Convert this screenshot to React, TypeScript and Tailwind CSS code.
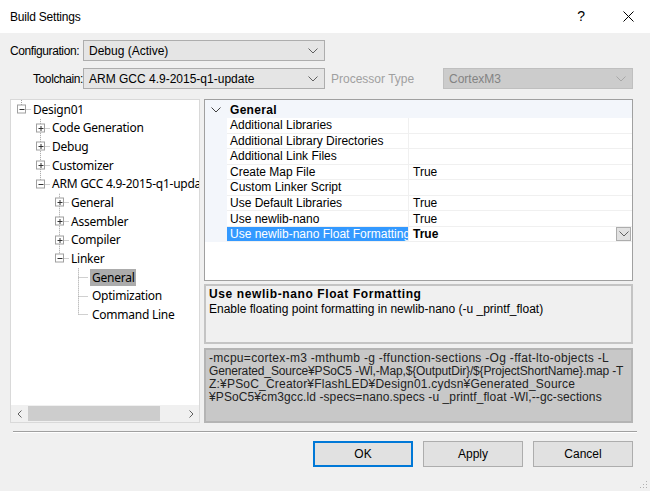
import React from 'react';

const ui = { fontFamily: '"Liberation Sans", Arial, sans-serif' };
const treeFont = { fontFamily: '"Noto Sans", "Open Sans", sans-serif' };

function Chevron({ color = '#606060' }: { color?: string }) {
  return (
    <svg width="10" height="6" viewBox="0 0 10 6" fill="none">
      <path d="M0.5 0.5L5 5L9.5 0.5" stroke={color} strokeWidth="1" />
    </svg>
  );
}

function Combo({ text, width, disabled }: { text: string; width: string; disabled?: boolean }) {
  return (
    <div
      className={`${width} h-[21px] flex items-center justify-between pl-[5px] pr-[6px] border ${
        disabled ? 'bg-[#cccccc] border-[#bfbfbf] text-[#838383]' : 'bg-[#e5e5e5] border-[#adadad] text-[#000]'
      }`}
    >
      <span className="text-[12px]">{text}</span>
      <Chevron color={disabled ? '#a8a8a8' : '#606060'} />
    </div>
  );
}

const ROW = 18.65;
const treeRows: { label: string; level: number; box?: '+' | '-'; selected?: boolean }[] = [
  { label: 'Design01', level: 0, box: '-' },
  { label: 'Code Generation', level: 1, box: '+' },
  { label: 'Debug', level: 1, box: '+' },
  { label: 'Customizer', level: 1, box: '+' },
  { label: 'ARM GCC 4.9-2015-q1-update', level: 1, box: '-' },
  { label: 'General', level: 2, box: '+' },
  { label: 'Assembler', level: 2, box: '+' },
  { label: 'Compiler', level: 2, box: '+' },
  { label: 'Linker', level: 2, box: '-' },
  { label: 'General', level: 3, selected: true },
  { label: 'Optimization', level: 3 },
  { label: 'Command Line', level: 3 },
];

function TreeLines() {
  const y = (i: number) => 9.5 + ROW * i;
  const x = (l: number) => 10.5 + 19 * l;
  const dot = { stroke: '#a0a0a0', strokeWidth: 1, strokeDasharray: '1 1' };
  return (
    <svg className="absolute left-0 top-0" width="190" height="240" fill="none">
      {/* root */}
      <line x1={x(0)} y1={0} x2={x(0)} y2={y(0)} {...dot} />
      <line x1={x(1)} y1={y(1) - 9} x2={x(1)} y2={y(4)} {...dot} />
      <line x1={x(2)} y1={y(5) - 9} x2={x(2)} y2={y(8)} {...dot} />
      <line x1={x(3)} y1={y(9) - 9} x2={x(3)} y2={y(11)} {...dot} />
      {treeRows.map((r, i) => (
        <line key={'h' + i} x1={x(r.level)} y1={Math.floor(y(i)) + 0.5} x2={x(r.level) + 10} y2={Math.floor(y(i)) + 0.5} {...dot} />
      ))}
      {treeRows.map((r, i) =>
        r.box ? (
          <g key={'b' + i}>
            <rect x={x(r.level) - 4} y={Math.floor(y(i)) - 4} width="8" height="8" fill="#fff" stroke="#a0a0a0" />
            <line x1={x(r.level) - 2} y1={Math.floor(y(i)) + 0.5} x2={x(r.level) + 3} y2={Math.floor(y(i)) + 0.5} stroke="#333" />
            {r.box === '+' && (
              <line x1={x(r.level) + 0.5} y1={Math.floor(y(i)) - 2} x2={x(r.level) + 0.5} y2={Math.floor(y(i)) + 3} stroke="#333" />
            )}
          </g>
        ) : null
      )}
    </svg>
  );
}

const props: { name: string; value?: string }[] = [
  { name: 'Additional Libraries' },
  { name: 'Additional Library Directories' },
  { name: 'Additional Link Files' },
  { name: 'Create Map File', value: 'True' },
  { name: 'Custom Linker Script' },
  { name: 'Use Default Libraries', value: 'True' },
  { name: 'Use newlib-nano', value: 'True' },
  { name: 'Use newlib-nano Float Formatting', value: 'True' },
];

export default function App() {
  return (
    <div className="w-[650px] h-[491px] bg-[#f0f0f0] flex flex-col text-[12px] text-black overflow-hidden" style={ui}>
      {/* title bar */}
      <div className="h-[33px] bg-white flex items-center pl-[10px] pr-[16px]">
        <span className="text-[12px] tracking-[-0.2px]">Build Settings</span>
        <span className="ml-auto mr-[38px] text-[14px]">?</span>
        <svg width="11" height="11" viewBox="0 0 11 11">
          <path d="M0.5 0.5L10.5 10.5M10.5 0.5L0.5 10.5" stroke="#000" strokeWidth="1" />
        </svg>
      </div>

      <div className="flex-1 flex flex-col pl-[10px] pr-[17px]">
        <div className="mt-[7px] flex items-center">
          <span className="w-[73px] tracking-[-0.4px]">Configuration:</span>
          <Combo text="Debug (Active)" width="w-[242px]" />
        </div>
        <div className="mt-[7px] flex items-center">
          <span className="w-[73px] pl-[23px] tracking-[-0.4px]">Toolchain:</span>
          <Combo text="ARM GCC 4.9-2015-q1-update" width="w-[242px]" />
          <span className="w-[118px] pl-[6px] text-[#a0a0a0]">Processor Type</span>
          <Combo text="CortexM3" width="flex-1" disabled />
        </div>

        <div className="mt-[10px] flex gap-[4px] h-[324px]">
          {/* tree */}
          <div className="w-[190px] shrink-0 border border-[#d9d9d9] bg-white flex flex-col" style={treeFont}>
            <div className="flex-1 relative overflow-hidden text-[12px] tracking-[-0.25px]">
              <TreeLines />
              {treeRows.map((r, i) => (
                <div
                  key={i}
                  className="h-[18.65px] flex items-center whitespace-nowrap"
                  style={{ paddingLeft: r.level === 3 ? 79 : 20 + 19 * r.level }}
                >
                  <span className={`px-[2px] leading-[17px] ${r.selected ? 'bg-[#acacac]' : ''}`}>{r.label}</span>
                </div>
              ))}
            </div>
            <div className="h-[17px] bg-[#f0f0f0] flex items-center">
              <span className="w-[17px] flex justify-center">
                <svg width="5" height="8" viewBox="0 0 5 8"><path d="M4.5 0.5L1 4L4.5 7.5" stroke="#606060" fill="none" /></svg>
              </span>
              <span className="w-[132px] h-[15px] bg-[#cdcdcd]" />
              <span className="flex-1 flex justify-end pr-[5px]">
                <svg width="5" height="8" viewBox="0 0 5 8"><path d="M0.5 0.5L4 4L0.5 7.5" stroke="#606060" fill="none" /></svg>
              </span>
            </div>
          </div>

          {/* right column */}
          <div className="w-[429px] min-w-0 flex flex-col">
            <div className="h-[182px] border border-[#a0a0a0] bg-white flex flex-col">
              <div className="h-[18px] bg-[#f3f6fb] flex items-center pt-[1px]">
                <span className="w-[22px] flex justify-center">
                  <Chevron color="#404040" />
                </span>
                <span className="pl-[3px] font-bold tracking-[0.3px]">General</span>
              </div>
              {props.map((p, i) => {
                const sel = i === props.length - 1;
                return (
                  <div key={i} className="h-[15.55px] flex">
                    <div className="w-[22px] bg-[#f3f6fb]" />
                    <div
                      className={`w-[182px] px-[3px] flex items-center whitespace-nowrap overflow-hidden border-b border-r ${
                        sel ? 'bg-[#3399ff] text-white border-[#f0f0f0]' : 'border-[#f0f0f0]'
                      }`}
                    >
                      {p.name}
                    </div>
                    <div className={`flex-1 pl-[4px] flex items-center border-b border-[#f0f0f0] ${sel ? 'font-bold' : ''}`}>
                      <span>{p.value}</span>
                      {sel && (
                        <span className="ml-auto mr-[1px] w-[15px] h-[14px] bg-[#e1e1e1] border border-[#adadad] flex items-center justify-center">
                          <Chevron color="#606060" />
                        </span>
                      )}
                    </div>
                  </div>
                );
              })}
            </div>

            <div className="mt-[3px] h-[60px] border-2 border-[#c4c4c4] bg-[#f0f0f0] px-[3px] pt-[1px]">
              <div className="font-bold leading-[15px] tracking-[0.6px]">Use newlib-nano Float Formatting</div>
              <div className="leading-[15px]">Enable floating point formatting in newlib-nano (-u _printf_float)</div>
            </div>

            <div className="mt-[4px] flex-1 border-2 border-[#b4b4b4] bg-[#c8c8c8] px-[3px] pt-[2px] text-[#222] leading-[13px] whitespace-nowrap overflow-hidden">
              <div className="tracking-[0.3px]">-mcpu=cortex-m3 -mthumb -g -ffunction-sections -Og -ffat-lto-objects -L</div>
              <div className="tracking-[-0.15px]">Generated_Source¥PSoC5 -Wl,-Map,${'{'}OutputDir{'}'}/${'{'}ProjectShortName{'}'}.map -T</div>
              <div className="tracking-[0.2px]">Z:¥PSoC_Creator¥FlashLED¥Design01.cydsn¥Generated_Source</div>
              <div className="tracking-[0.1px]">¥PSoC5¥cm3gcc.ld -specs=nano.specs -u _printf_float -Wl,--gc-sections</div>
            </div>
          </div>
        </div>

        <div className="mt-[8px] ml-[3px] mr-[-4px] h-[2px] border-t border-[#a0a0a0] border-b border-b-white" />

        <div className="mt-[8px] flex justify-end gap-[10px]">
          <button className="w-[100px] h-[26px] bg-[#e1e1e1] border-2 border-[#0078d7]">OK</button>
          <button className="w-[100px] h-[26px] bg-[#e1e1e1] border border-[#adadad]">Apply</button>
          <button className="w-[100px] h-[26px] bg-[#e1e1e1] border border-[#adadad]">Cancel</button>
        </div>

        <div className="mt-auto mb-[2px] mr-[-15px] flex justify-end">
          <svg width="9" height="9" viewBox="0 0 9 9">
            <rect x="7" y="1" width="1" height="1" fill="#b0b0b0" />
            <rect x="4" y="4" width="1" height="1" fill="#b0b0b0" />
            <rect x="7" y="4" width="1" height="1" fill="#b0b0b0" />
            <rect x="1" y="7" width="1" height="1" fill="#b0b0b0" />
            <rect x="4" y="7" width="1" height="1" fill="#b0b0b0" />
            <rect x="7" y="7" width="1" height="1" fill="#b0b0b0" />
          </svg>
        </div>
      </div>
    </div>
  );
}
